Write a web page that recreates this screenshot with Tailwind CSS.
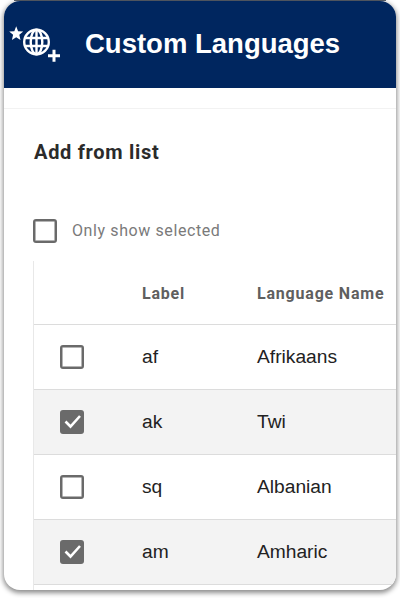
<!DOCTYPE html>
<html>
<head>
<meta charset="utf-8">
<script src="https://cdn.jsdelivr.net/npm/@tailwindcss/browser@4"></script>
</head>
<body class="bg-white w-[400px] h-[598px] overflow-hidden font-['Liberation_Sans',sans-serif]">
<div class="mx-[14px] h-[1px] bg-[#5a616c]"></div>
<div class="ml-[4px] w-[392px] h-[589px] rounded-[16px] bg-white overflow-hidden shadow-[0_2px_5px_1px_rgba(0,0,0,0.45)] flex flex-col">
  <header class="h-[87px] shrink-0 bg-[#00265f] flex items-center">
    <svg class="ml-[5px] mt-[-3px] w-[56px] h-[42px] shrink-0" viewBox="0 0 56 42" fill="none">
      <polygon fill="#fff" points="7.200,4.200 9.100,9.200 14.200,9.500 10.300,12.800 11.500,18 7.200,15.200 2.900,18 4.100,12.800 0.200,9.500 5.300,9.200"/>
      <g stroke="#fff" stroke-width="2.400">
        <circle cx="27.500" cy="20" r="12.300"/>
        <ellipse cx="27.500" cy="20" rx="5.800" ry="12.300"/>
        <path d="M27.500 8v24M16.500 16h22M16.500 24h22"/>
      </g>
      <path d="M39 33.700h12M45 27.700v12" stroke="#fff" stroke-width="3"/>
    </svg>
    <h1 class="ml-[20px] mt-[-2px] text-[27.500px] leading-none font-bold text-white whitespace-nowrap">Custom Languages</h1>
  </header>
  <div class="h-[21px] shrink-0 border-b border-[#f2f2f2]"></div>
  <main class="flex-1 min-h-0 pl-[29px]">
    <h2 class="ml-[1px] mt-[32px] h-[22px] text-[20px] tracking-[0.7px] leading-[22px] font-bold text-[#2b2b2b] font-['Roboto',sans-serif]">Add from list</h2>
    <label class="mt-[56px] flex items-center h-[24px]">
      <span class="w-[24px] h-[24px] rounded-[3px] border-2 border-[#6a6a6a] shadow-[inset_0_0_0_0.5px_#6a6a6a] bg-white shrink-0"></span>
      <span class="ml-[15px] text-[16px] tracking-[0.6px] text-[#7a7a7a] font-['Roboto',sans-serif]">Only show selected</span>
    </label>
    <div class="mt-[18px] border-l border-[#e8e8e8]">
      <div class="h-[64px] pt-[3px] flex items-center border-b border-[#dcdcdc] text-[16px] font-bold text-[#5f5f5f] font-['Roboto',sans-serif] tracking-[0.8px]">
        <span class="ml-[108px] w-[115px]">Label</span><span class="whitespace-nowrap">Language Name</span>
      </div>
      <div class="h-[65px] flex items-center border-b border-[#dcdcdc] text-[19.200px] text-[#222222]">
        <span class="ml-[26px] w-[24px] h-[24px] rounded-[3px] border-2 border-[#6a6a6a] shadow-[inset_0_0_0_0.5px_#6a6a6a] bg-white shrink-0"></span>
        <span class="ml-[58px] w-[115px]">af</span><span>Afrikaans</span>
      </div>
      <div class="h-[65px] flex items-center border-b border-[#dcdcdc] bg-[#f3f3f3] text-[19.200px] text-[#222222]">
        <span class="ml-[26px] w-[24px] h-[24px] rounded-[3px] bg-[#6a6a6a] shrink-0">
          <svg class="w-[24px] h-[24px]" viewBox="0 0 24 24" fill="none"><path d="M5.500 11.500l5 5 9.500-10.500" stroke="#fff" stroke-width="2.600"/></svg>
        </span>
        <span class="ml-[58px] w-[115px]">ak</span><span>Twi</span>
      </div>
      <div class="h-[65px] flex items-center border-b border-[#dcdcdc] text-[19.200px] text-[#222222]">
        <span class="ml-[26px] w-[24px] h-[24px] rounded-[3px] border-2 border-[#6a6a6a] shadow-[inset_0_0_0_0.5px_#6a6a6a] bg-white shrink-0"></span>
        <span class="ml-[58px] w-[115px]">sq</span><span>Albanian</span>
      </div>
      <div class="h-[65px] flex items-center border-b border-[#dcdcdc] bg-[#f3f3f3] text-[19.200px] text-[#222222]">
        <span class="ml-[26px] w-[24px] h-[24px] rounded-[3px] bg-[#6a6a6a] shrink-0">
          <svg class="w-[24px] h-[24px]" viewBox="0 0 24 24" fill="none"><path d="M5.500 11.500l5 5 9.500-10.500" stroke="#fff" stroke-width="2.600"/></svg>
        </span>
        <span class="ml-[58px] w-[115px]">am</span><span>Amharic</span>
      </div>
      <div class="h-[10px]"></div>
    </div>
  </main>
</div>
</body>
</html>
